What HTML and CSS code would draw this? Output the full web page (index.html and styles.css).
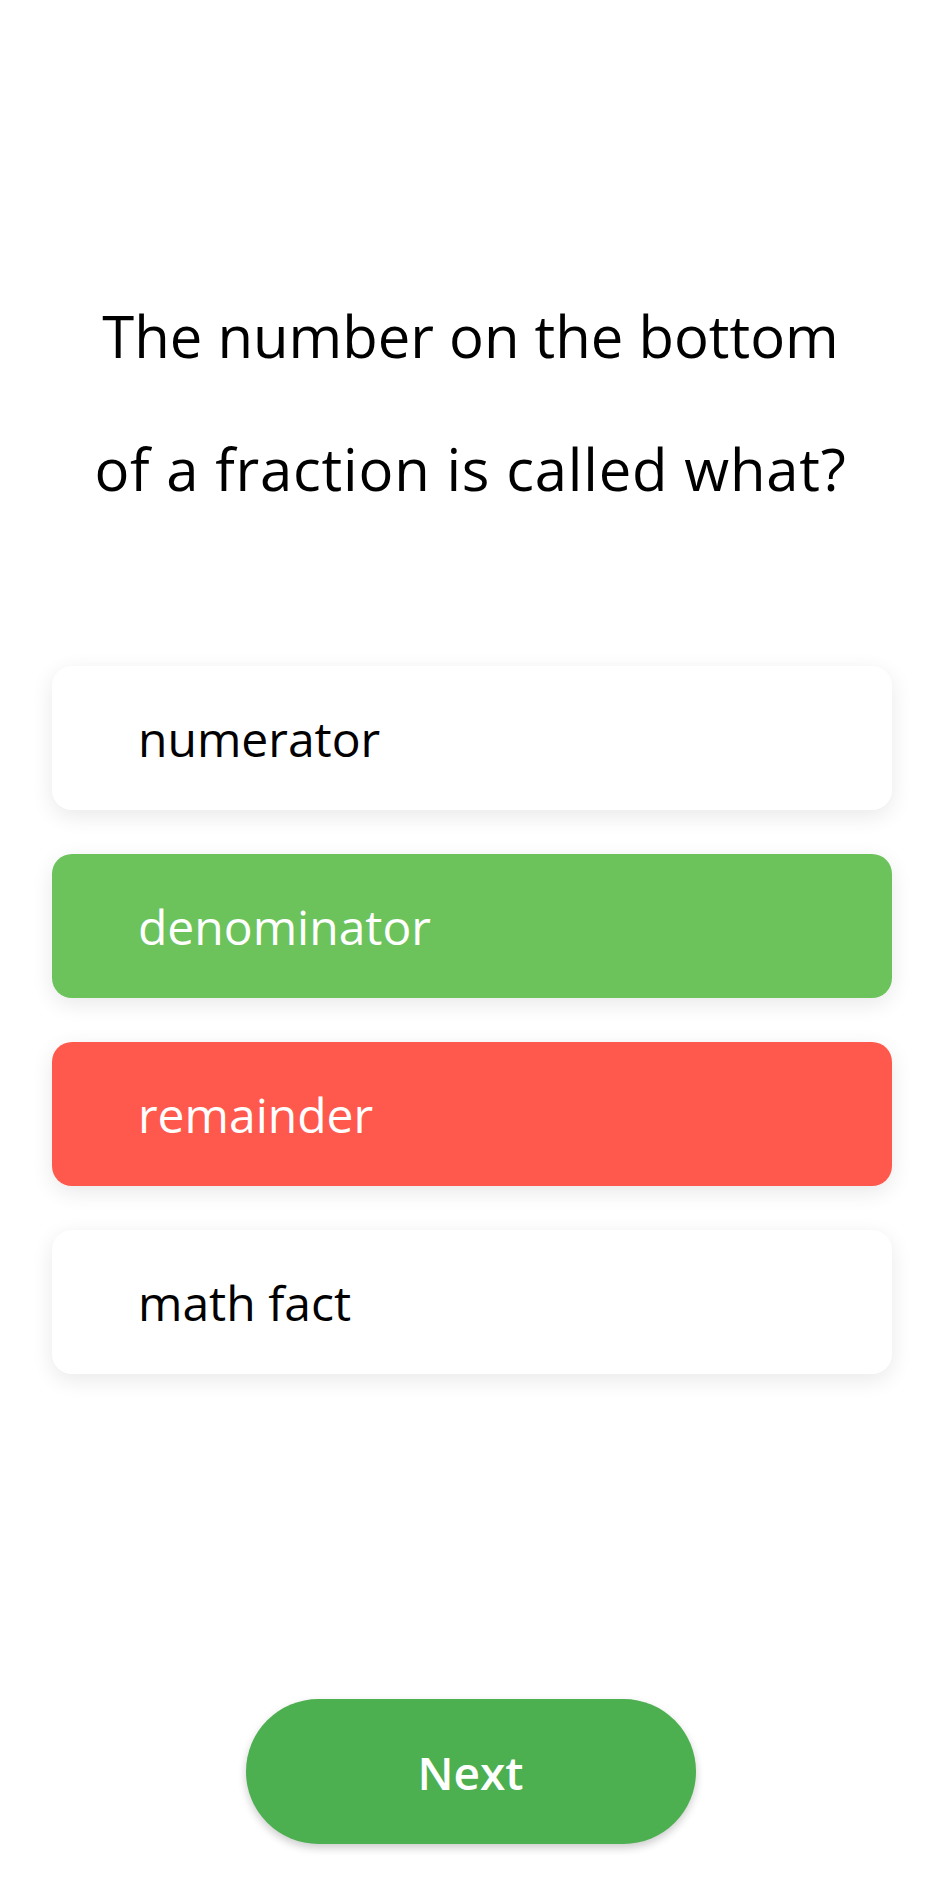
FILE: index.html
```html
<!DOCTYPE html>
<html lang="en">
<head>
<meta charset="utf-8">
<title>Quiz</title>
<link rel="stylesheet" href="styles.css">
</head>
<body>
<main class="screen">
  <h1 class="question">The number on the bottom<br><span class="question-line">of a fraction is called what?</span></h1>
  <ul class="options">
    <li class="option">numerator</li>
    <li class="option option-correct">denominator</li>
    <li class="option option-wrong">remainder</li>
    <li class="option">math fact</li>
  </ul>
  <button class="next" type="button">Next</button>
</main>
</body>
</html>
```
FILE: styles.css
```css
html, body {
  margin: 0;
  padding: 0;
  background: #ffffff;
}

.screen {
  width: 941px;
  height: 1883px;
  display: flex;
  flex-direction: column;
  font-family: "Open Sans", "Noto Sans", sans-serif;
  color: #000;
  box-sizing: border-box;
}

.question {
  margin: 269px 0 0;
  font-size: 58px;
  font-weight: 400;
  line-height: 133px;
  text-align: center;
}

.question-line {
  letter-spacing: 0.8px;
}

.options {
  list-style: none;
  margin: 131px 49px 0 52px;
  padding: 0;
  display: flex;
  flex-direction: column;
  gap: 44px;
}

.option {
  height: 144px;
  box-sizing: border-box;
  padding-left: 86px;
  display: flex;
  align-items: center;
  background: #ffffff;
  border-radius: 20px;
  box-shadow: 0 6px 22px rgba(0, 0, 0, 0.09);
  font-size: 48px;
  color: #000;
}

.option-correct {
  background: #6cc35c;
  color: #ffffff;
}

.option-wrong {
  background: #ff594d;
  color: #ffffff;
}

.next {
  margin: auto auto 39px;
  width: 450px;
  height: 145px;
  border: none;
  border-radius: 73px;
  background: #4caf50;
  color: #ffffff;
  font-family: "Open Sans", "Noto Sans", sans-serif;
  font-weight: 600;
  font-size: 46px;
  box-shadow: 0 4px 8px rgba(0, 0, 0, 0.2);
  cursor: pointer;
}
```
